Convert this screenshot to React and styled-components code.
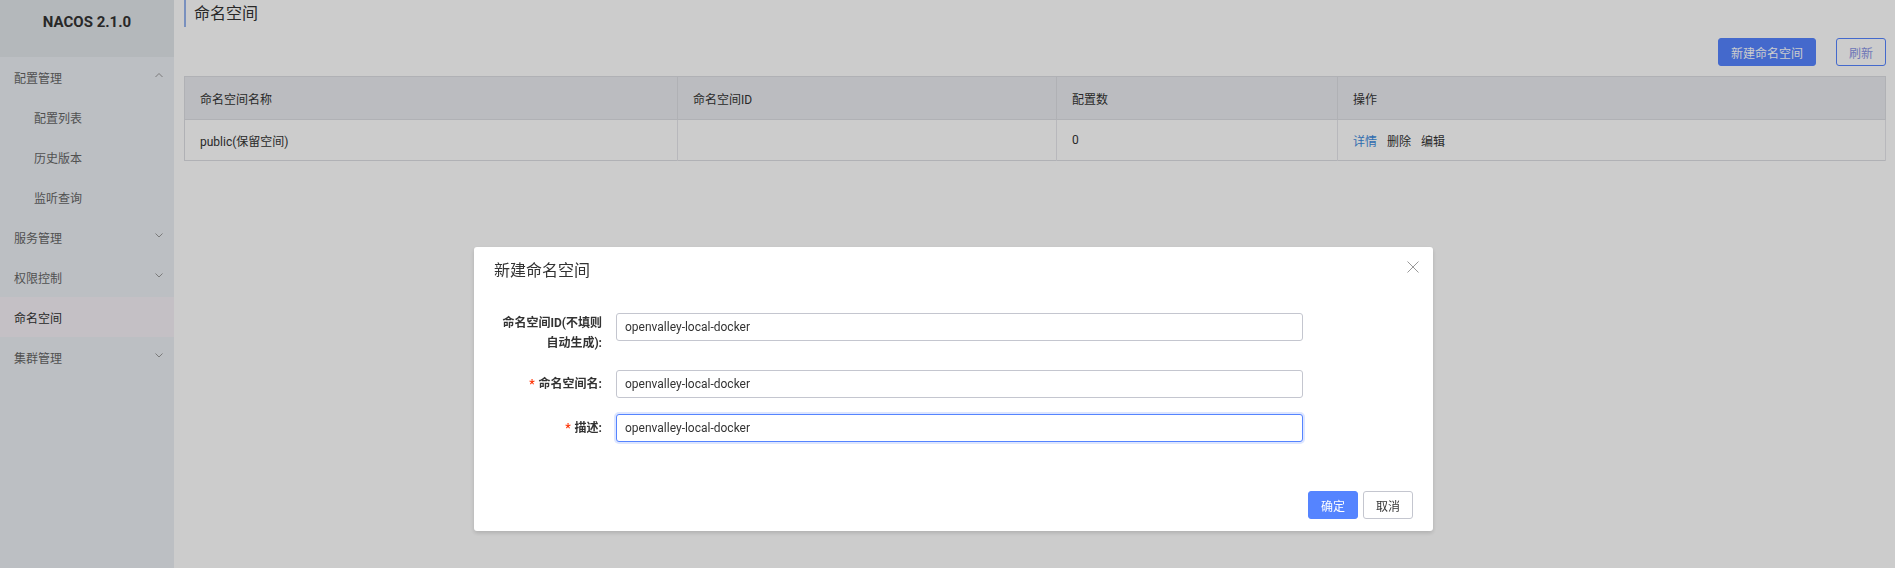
import React from 'react'
import { styled, createGlobalStyle } from 'styled-components'

const GlobalStyle = createGlobalStyle`
  html, body {
    margin: 0;
    padding: 0;
    background: #fff;
  }
  body {
    font-family: Roboto, "Noto Sans CJK SC", sans-serif;
    font-size: 12px;
    color: #333;
  }
  * { box-sizing: border-box; }
`

const Layout = styled.div`
  display: flex;
  height: 100vh;
`

const Sidebar = styled.aside`
  width: 174px;
  flex-shrink: 0;
  background: #ebeff4;
`

const Brand = styled.div`
  height: 57px;
  display: flex;
  align-items: center;
  justify-content: center;
  padding-bottom: 14px;
  background: #e2e6ea;
  font-family: Roboto, sans-serif;
  font-weight: 700;
  font-size: 15px;
  color: #333;
`

const MenuItem = styled.div`
  height: 40px;
  display: flex;
  align-items: center;
  justify-content: space-between;
  padding: 0 11px 0 ${props => (props.sub ? '34px' : '14px')};
  font-size: 12px;
  color: ${props => (props.active ? '#333' : '#666')};
  background: ${props => (props.active ? '#f5f1f7' : 'transparent')};
`

const Chevron = styled.svg`
  width: 8px;
  height: 8px;
  margin-top: -4px;
`

const Main = styled.main`
  flex: 1;
  padding: 0 9px 0 10px;
  background: #fff;
`

const PageTitle = styled.h1`
  margin: 0;
  height: 27px;
  line-height: 26px;
  padding: 1px 0 0 8px;
  border-left: 2px solid #98b4ee;
  font-size: 16px;
  font-weight: 400;
  color: #333;
`

const Toolbar = styled.div`
  display: flex;
  justify-content: flex-end;
  gap: 20px;
  margin: 11px 0 10px 0;
`

const Button = styled.button`
  height: 28px;
  padding: 0 ${props => props.pad || 12}px;
  border-radius: 3px;
  font-family: Roboto, "Noto Sans CJK SC", sans-serif;
  font-size: 12px;
  cursor: pointer;
  border: 1px solid ${props => (props.primary ? '#5584ff' : props.outline ? '#5584ff' : '#c4c6cf')};
  background: ${props => (props.primary ? '#5584ff' : '#fff')};
  color: ${props => (props.primary ? '#fff' : props.outline ? '#8a95e6' : '#333')};
`

const Table = styled.table`
  width: 100%;
  border-collapse: collapse;
  table-layout: fixed;
  border: 1px solid #dcdee3;
`

const Th = styled.th`
  height: 43px;
  padding: 0 15px;
  text-align: left;
  font-weight: 400;
  font-size: 12px;
  color: #333;
  background: #eaecf0;
  border-right: 1px solid #dcdee3;
  border-bottom: 1px solid #dcdee3;
`

const Td = styled.td`
  height: 41px;
  padding: 0 15px;
  font-size: 12px;
  color: #333;
  border-right: 1px solid #e6e7eb;
`

const Action = styled.span`
  margin-right: 10px;
  color: ${props => (props.link ? '#3b89dc' : '#333')};
`

const Mask = styled.div`
  position: fixed;
  inset: 0;
  background: rgba(0, 0, 0, 0.2);
`

const Dialog = styled.div`
  position: fixed;
  left: 474px;
  top: 247px;
  width: 959px;
  background: #fff;
  border-radius: 3px;
  box-shadow: 0 2px 4px rgba(0, 0, 0, 0.15);
`

const DialogHeader = styled.div`
  padding: 12px 20px;
  font-size: 16px;
  line-height: 24px;
  color: #333;
`

const Close = styled.svg`
  position: absolute;
  top: 14px;
  right: 14px;
  width: 12px;
  height: 12px;
`

const DialogBody = styled.div`
  padding: 18px 20px 37px;
`

const FormItem = styled.div`
  display: flex;
  align-items: flex-start;
  margin-bottom: ${props => (props.last ? 0 : props.gap || 16)}px;
`

const Label = styled.label`
  width: 122px;
  flex-shrink: 0;
  padding: ${props => (props.multiline ? '0 14px 0 4px' : '4px 14px 0 4px')};
  text-align: right;
  line-height: 20px;
  font-size: 12px;
  font-weight: 700;
  color: #333;
`

const Required = styled.span`
  color: #ff3000;
  margin-right: 4px;
`

const Input = styled.input`
  width: 687px;
  height: 28px;
  padding: 0 8px;
  border: 1px solid ${props => (props.focused ? '#5584ff' : '#c4c6cf')};
  border-radius: 3px;
  font-family: Roboto, "Noto Sans CJK SC", sans-serif;
  font-size: 12px;
  color: #333;
  outline: none;
  box-shadow: ${props => (props.focused ? '0 0 0 2px rgba(85, 132, 255, 0.2)' : 'none')};
`

const DialogFooter = styled.div`
  display: flex;
  justify-content: flex-end;
  gap: 5px;
  padding: 12px 20px;
`

const Arrow = ({ up }) => (
  <Chevron viewBox="0 0 8 8">
    <polyline
      points={up ? '0.5,6 4,2.5 7.5,6' : '0.5,2.5 4,6 7.5,2.5'}
      fill="none"
      stroke="#999"
      strokeWidth="1"
    />
  </Chevron>
)

const menu = [
  { label: '配置管理', arrow: 'up' },
  { label: '配置列表', sub: true },
  { label: '历史版本', sub: true },
  { label: '监听查询', sub: true },
  { label: '服务管理', arrow: 'down' },
  { label: '权限控制', arrow: 'down' },
  { label: '命名空间', active: true },
  { label: '集群管理', arrow: 'down' },
]

const App = () => {
  const value = 'openvalley-local-docker'
  return (
    <>
      <GlobalStyle />
      <Layout>
        <Sidebar>
          <Brand>NACOS 2.1.0</Brand>
          {menu.map(item => (
            <MenuItem key={item.label} sub={item.sub} active={item.active}>
              <span>{item.label}</span>
              {item.arrow && <Arrow up={item.arrow === 'up'} />}
            </MenuItem>
          ))}
        </Sidebar>
        <Main>
          <PageTitle>命名空间</PageTitle>
          <Toolbar>
            <Button primary pad={12}>新建命名空间</Button>
            <Button outline pad={12}>刷新</Button>
          </Toolbar>
          <Table>
            <colgroup>
              <col style={{ width: 493 }} />
              <col style={{ width: 379 }} />
              <col style={{ width: 281 }} />
              <col />
            </colgroup>
            <thead>
              <tr>
                <Th>命名空间名称</Th>
                <Th>命名空间ID</Th>
                <Th>配置数</Th>
                <Th>操作</Th>
              </tr>
            </thead>
            <tbody>
              <tr>
                <Td>public(保留空间)</Td>
                <Td></Td>
                <Td>0</Td>
                <Td>
                  <Action link>详情</Action>
                  <Action>删除</Action>
                  <Action>编辑</Action>
                </Td>
              </tr>
            </tbody>
          </Table>
        </Main>
      </Layout>
      <Mask />
      <Dialog>
        <DialogHeader>新建命名空间</DialogHeader>
        <Close viewBox="0 0 12 12">
          <path d="M0.5 0.5 L11.5 11.5 M11.5 0.5 L0.5 11.5" stroke="#999" strokeWidth="1" />
        </Close>
        <DialogBody>
          <FormItem gap={17}>
            <Label multiline>命名空间ID(不填则自动生成):</Label>
            <Input defaultValue={value} />
          </FormItem>
          <FormItem>
            <Label><Required>*</Required>命名空间名:</Label>
            <Input defaultValue={value} />
          </FormItem>
          <FormItem last>
            <Label><Required>*</Required>描述:</Label>
            <Input defaultValue={value} focused />
          </FormItem>
        </DialogBody>
        <DialogFooter>
          <Button primary pad={12}>确定</Button>
          <Button pad={12}>取消</Button>
        </DialogFooter>
      </Dialog>
    </>
  )
}

export default App
